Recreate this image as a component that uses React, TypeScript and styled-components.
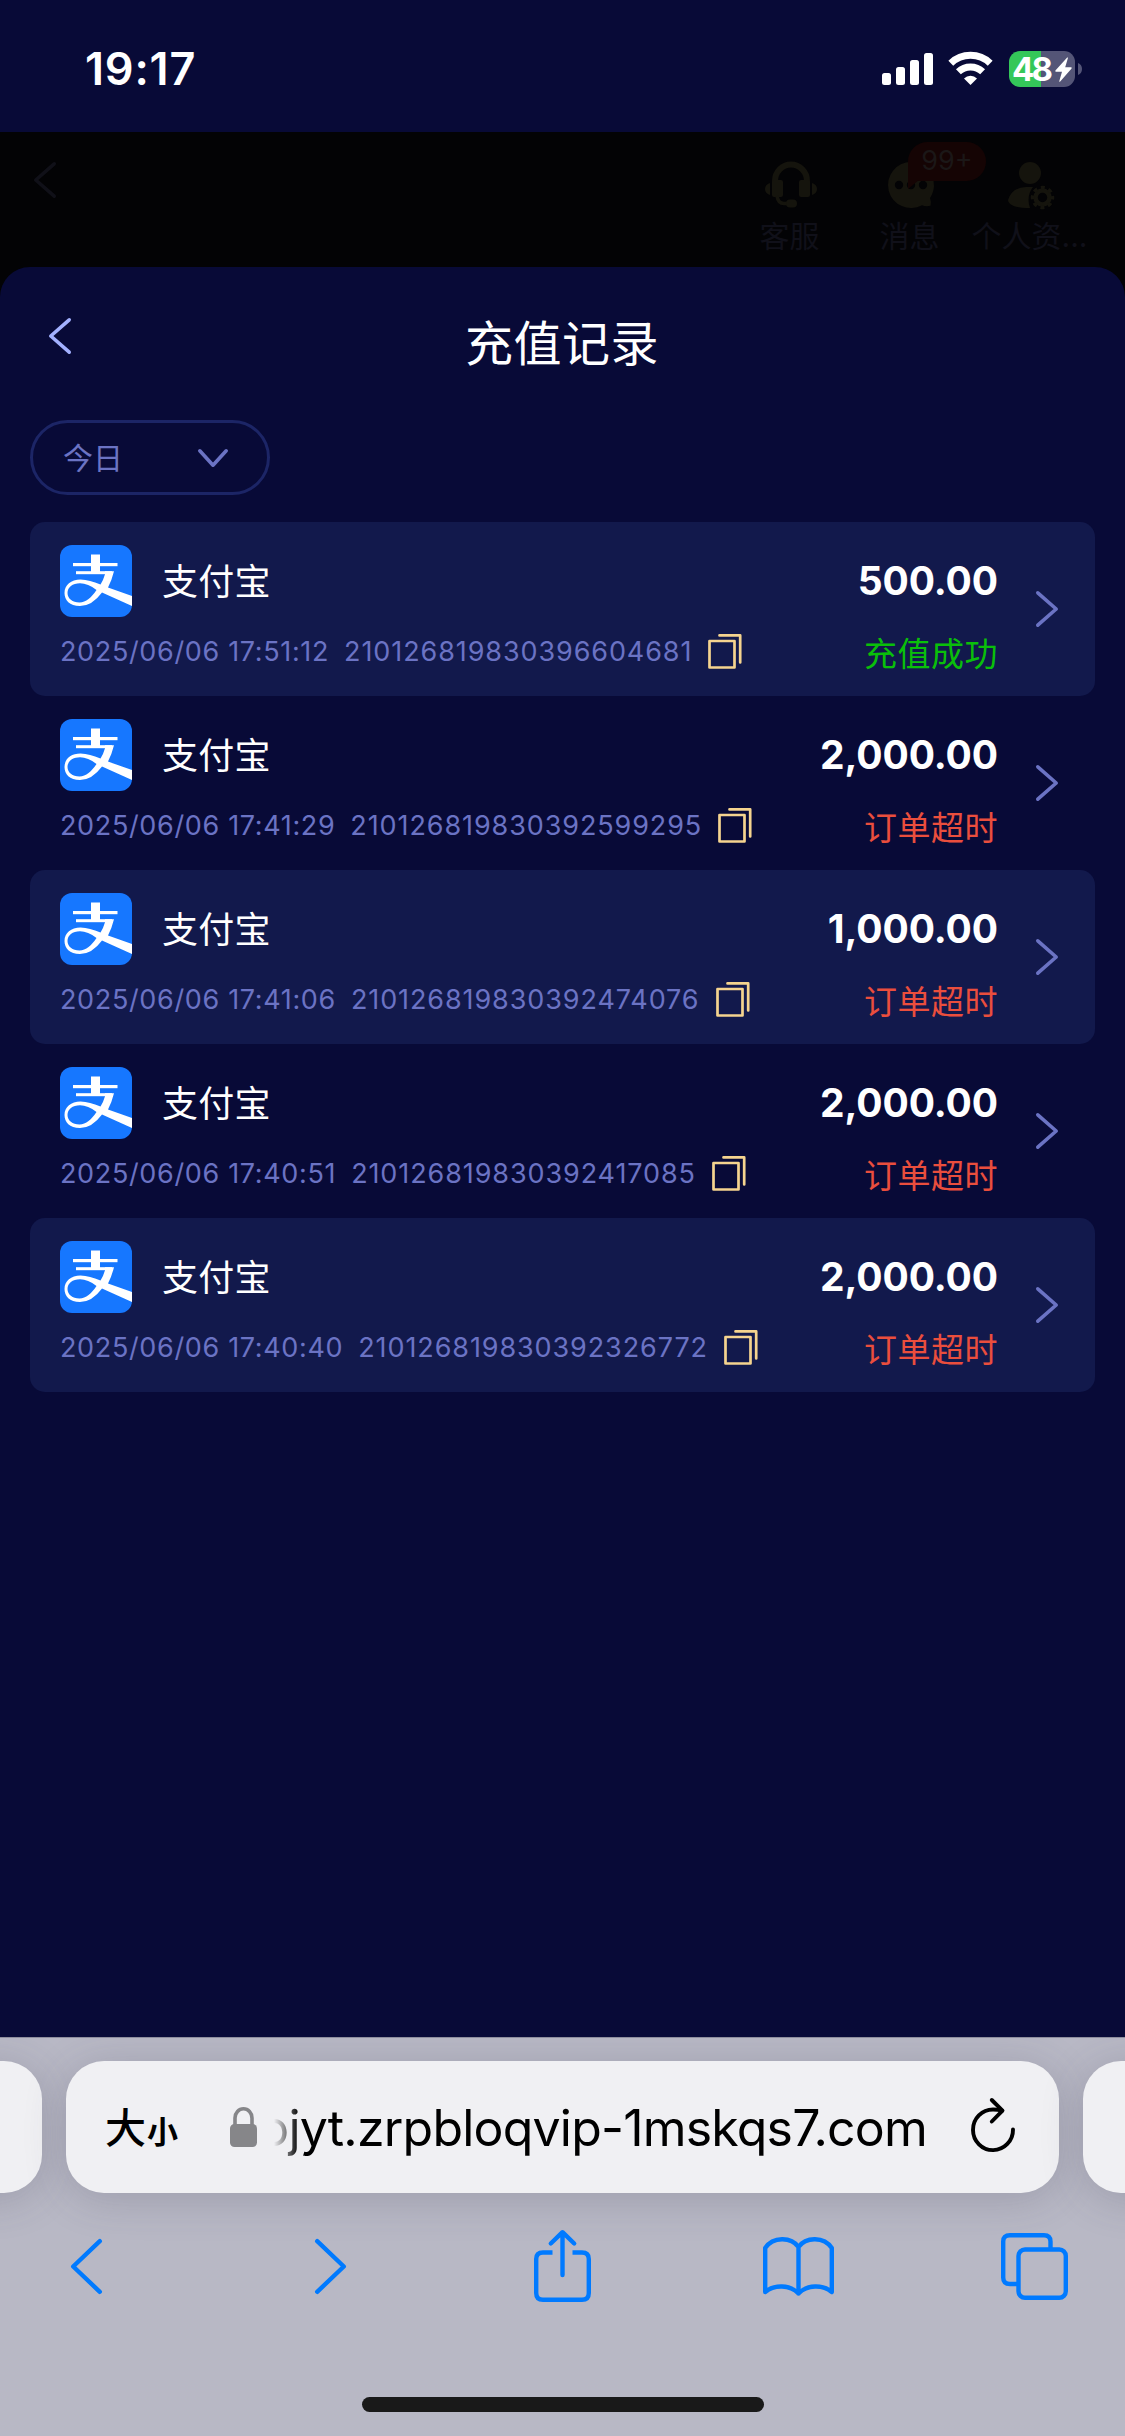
import React from "react";
import styled, { createGlobalStyle } from "styled-components";

const GlobalStyle = createGlobalStyle`
  * { box-sizing: border-box; }
  body { margin: 0; background: #080a37; }
`;

const Screen = styled.div`
  width: 1125px;
  height: 2436px;
  display: flex;
  flex-direction: column;
  overflow: hidden;
  background: #080a37;
  font-family: Inter, "Noto Sans CJK SC", sans-serif;
  color: #fff;
  svg { display: block; flex: none; overflow: visible; }
`;

const StatusBar = styled.header`
  height: 132px;
  flex: none;
  display: flex;
  align-items: flex-start;
  justify-content: space-between;
  padding: 51px 43px 0 85px;
`;

const Clock = styled.div`
  font-size: 45px;
  font-weight: 600;
  line-height: 36px;
  letter-spacing: 0.8px;
`;

const StatusIcons = styled.div`
  display: flex;
  height: 36px;
`;

const Battery = styled.div`
  width: 66px;
  height: 36px;
  margin: 0 3px 0 16px;
  border-radius: 11px;
  background: linear-gradient(90deg, #34c759 32px, #545577 32px);
  display: flex;
  align-items: center;
  padding-left: 3px;
  font-size: 33px;
  font-weight: 700;
  line-height: 36px;
  letter-spacing: -2.8px;
`;

const DimHeader = styled.div`
  height: 135px;
  flex: none;
  display: flex;
  justify-content: space-between;
  padding: 30px 34px 0 34px;
  background: #030305;
`;

const DimActions = styled.nav`
  display: flex;
`;

const DimAction = styled.div`
  position: relative;
  width: 120px;
  display: flex;
  flex-direction: column;
  align-items: center;
  color: #101019;
  font-size: 30px;
  line-height: 40px;
  white-space: nowrap;
  gap: 8px;
`;

const DimLabel = styled.span`
  margin-right: 3px;
`;

const Badge = styled.div`
  position: absolute;
  left: 57px;
  top: -20px;
  width: 78px;
  height: 39px;
  border-radius: 20px 20px 20px 0;
  background: #150404;
  color: #1b1717;
  font-size: 27px;
  line-height: 37px;
  text-align: center;
  &::after {
    content: "";
    position: absolute;
    left: 0;
    top: 38px;
    border-top: 9px solid #150404;
    border-right: 11px solid transparent;
  }
`;

const SheetBackdrop = styled.div`
  flex: 1;
  background: #030305;
  min-height: 0;
`;

const Sheet = styled.main`
  height: 100%;
  border-radius: 30px 30px 0 0;
  background: #080a37;
  padding: 0 30px;
`;

const TitleBar = styled.div`
  height: 153px;
  display: grid;
  grid-template-columns: 60px 1fr 60px;
  padding-top: 51px;
`;

const BackSlot = styled.div`
  padding-left: 19px;
`;

const Title = styled.h1`
  margin: 0 1px 0 0;
  font-size: 48px;
  font-weight: 400;
  line-height: 52px;
  letter-spacing: 0.5px;
  text-align: center;
`;

const DateSelect = styled.div`
  width: 240px;
  height: 75px;
  border: 3px solid #1c2566;
  border-radius: 38px;
  display: flex;
  align-items: center;
  justify-content: space-between;
  padding: 0 39px 0 30px;
  color: #6b73c4;
  font-size: 30px;
  line-height: 66px;
`;

const RecordList = styled.ul`
  list-style: none;
  margin: 27px 0 0;
  padding: 0;
`;

const Record = styled.li<{ $shaded: boolean }>`
  height: 174px;
  border-radius: 15px;
  background: ${(p) => (p.$shaded ? "#12194c" : "transparent")};
  display: flex;
  padding: 23px 37px 0 30px;
`;

const RecordMain = styled.div`
  flex: 1;
`;

const Method = styled.div`
  display: flex;
  align-items: center;
  gap: 30px;
  height: 72px;
  font-size: 36px;
  line-height: 72px;
  letter-spacing: 0.2px;
`;

const MethodName = styled.span`
  padding-top: 2px;
`;

const Details = styled.div`
  display: flex;
  align-items: center;
  height: 36px;
  margin-top: 16px;
  color: #6b73c4;
  font-size: 27px;
  line-height: 37px;
  letter-spacing: 0.65px;
  white-space: pre;
`;

const OrderId = styled.span`
  margin: 0 16px 0 15px;
  letter-spacing: 0.9px;
`;

const Summary = styled.div`
  display: flex;
  flex-direction: column;
  align-items: flex-end;
  margin-right: 38px;
`;

const Amount = styled.div`
  font-size: 39px;
  font-weight: 700;
  line-height: 72px;
  letter-spacing: -0.1px;
`;

const Status = styled.div<{ $ok: boolean }>`
  margin-top: 19px;
  font-size: 33px;
  line-height: 36px;
  letter-spacing: 0.5px;
  color: ${(p) => (p.$ok ? "#0abf0a" : "#ea4e3d")};
`;

const ChevronSlot = styled.div`
  padding-top: 46px;
`;

const Browser = styled.footer`
  height: 399px;
  flex: none;
  border-top: 1px solid #8d8d9d;
  background: #b8b8c5;
  display: flex;
  flex-direction: column;
  align-items: center;
  overflow: hidden;
`;

const Tabs = styled.div`
  display: flex;
  gap: 24px;
  margin-top: 23px;
`;

const TabCard = styled.div`
  width: 993px;
  height: 132px;
  border-radius: 38px;
  background: #f0f0f3;
  box-shadow: 0 6px 42px rgba(60, 60, 80, 0.22);
  display: flex;
  align-items: center;
  padding: 0 44px 0 39px;
  color: #000;
`;

const TextSize = styled.div`
  display: flex;
  align-items: baseline;
  width: 125px;
  padding-top: 6px;
  font-weight: 500;
  font-size: 41px;
  line-height: 60px;
`;

const SmallGlyph = styled.span`
  margin-left: 1px;
  font-size: 31px;
  font-weight: 700;
`;

const Address = styled.div`
  flex: 1;
  display: flex;
  justify-content: flex-end;
  margin-right: 44px;
  padding-top: 2px;
  font-size: 50px;
  line-height: 70px;
  letter-spacing: -0.8px;
  white-space: nowrap;
  mask-image: linear-gradient(90deg, transparent 17px, #000 42px);
`;

const ReloadSlot = styled.div`
  padding-bottom: 4px;
`;

const Toolbar = styled.nav`
  display: grid;
  grid-template-columns: repeat(5, 236px);
  height: 72px;
  margin-top: 37px;
`;

const ToolButton = styled.div<{ $pad?: string }>`
  display: flex;
  justify-content: center;
  align-items: center;
  padding: ${(p) => p.$pad ?? "0"};
`;

const HomeIndicator = styled.div`
  width: 402px;
  height: 15px;
  margin-top: 95px;
  border-radius: 8px;
  background: #191919;
`;

type ChevronProps = { w: number; h: number; color: string; dir?: "left" | "right" | "down"; stroke?: number };

function Chevron({ w, h, color, dir = "left", stroke = 3.6 }: ChevronProps) {
  const a = stroke / 2;
  const points = {
    left: `${w - a},${a} ${a},${h / 2} ${w - a},${h - a}`,
    right: `${a},${a} ${w - a},${h / 2} ${a},${h - a}`,
    down: `${a},${a} ${w / 2},${h - a} ${w - a},${a}`,
  }[dir];
  return (
    <svg width={w} height={h} fill="none" stroke={color} strokeWidth={stroke} strokeLinecap="round" strokeLinejoin="round">
      <polyline points={points} />
    </svg>
  );
}

function SignalIcon() {
  return (
    <svg width="51" height="36" fill="#fff">
      <rect x="0" y="22" width="9" height="12" rx="2.5" />
      <rect x="14" y="16" width="9" height="18" rx="2.5" />
      <rect x="28" y="9" width="9" height="25" rx="2.5" />
      <rect x="42" y="2" width="9" height="32" rx="2.5" />
    </svg>
  );
}

const WifiSvg = styled.svg`
  margin-left: 15px;
`;

function WifiIcon() {
  return (
    <WifiSvg width="45" height="36" fill="none" stroke="#fff" strokeWidth="7">
      <path d="M2.8 12.2 A28.5 28.5 0 0 1 42.2 12.2" />
      <path d="M10.4 20.8 A17.5 17.5 0 0 1 34.600 20.8" />
      <path d="M22.5 34 L16 27.4 A9.5 9.5 0 0 1 29 27.4 Z" fill="#fff" stroke="none" />
    </WifiSvg>
  );
}

const BoltSvg = styled.svg`
  margin-left: 5px;
`;

function BoltIcon() {
  return (
    <BoltSvg width="17" height="25" viewBox="0 0 17 25" fill="#fff">
      <path d="M12.2 0.6 L0.4 13.6 Q0 14.8 1 14.8 H7 L4.2 24.4 Q4.6 25 5.2 24.6 L16.6 11.4 Q17 10.2 16 10.2 H10.2 L13 0.8 Q12.8 0.2 12.2 0.6Z" />
    </BoltSvg>
  );
}

function BatteryNub() {
  return (
    <svg width="4" height="36" fill="#545577">
      <path d="M0 12 Q4 13.5 4 18 Q4 22.5 0 24Z" />
    </svg>
  );
}

const DIM_ICON = "#15140d";

function HeadsetIcon() {
  return (
    <svg width="52" height="46" viewBox="0 0 52 46" fill={DIM_ICON}>
      <path d="M10 20 V19 A16 16.5 0 0 1 42 19 V20" fill="none" stroke={DIM_ICON} strokeWidth="6" />
      <rect x="7" y="18" width="11" height="17" rx="2" />
      <rect x="34" y="18" width="11" height="17" rx="2" />
      <path d="M5 21 V33 Q0 31.500 0 27 Q0 22.500 5 21Z" />
      <path d="M47 21 V33 Q52 31.500 52 27 Q52 22.500 47 21Z" />
      <path d="M12 34 Q13 41.500 19 41.500 H25" fill="none" stroke={DIM_ICON} strokeWidth="3.5" />
      <rect x="21" y="37.500" width="11" height="8" rx="4" />
    </svg>
  );
}

function MessageIcon() {
  return (
    <svg width="46" height="46" viewBox="0 0 46 46">
      <path d="M23 0 A23 23 0 1 0 34 43.200 Q38 45 42.500 43.800 Q43.500 40 42 36 A23 23 0 0 0 23 0Z" fill={DIM_ICON} />
      <g fill="#030305">
        <circle cx="11" cy="23" r="4.200" />
        <circle cx="23" cy="23" r="4.200" />
        <circle cx="35" cy="23" r="4.200" />
      </g>
    </svg>
  );
}

function ProfileIcon() {
  return (
    <svg width="46" height="46" viewBox="0 0 46 46" fill={DIM_ICON}>
      <circle cx="22" cy="11" r="11" />
      <path d="M25 25 H18 Q4 25.500 0 38 Q0 46 22 46 Q18 34 25 25Z" />
      <circle cx="34.500" cy="35.500" r="7" fill="none" stroke={DIM_ICON} strokeWidth="4.500" />
      <circle cx="34.500" cy="35.500" r="10" fill="none" stroke={DIM_ICON} strokeWidth="3.500" strokeDasharray="4 3.854" strokeDashoffset="2" />
    </svg>
  );
}

function AlipayLogo() {
  return (
    <svg width="72" height="72" viewBox="0 0 72 72">
      <rect width="72" height="72" rx="12" fill="#1677ff" />
      <g fill="#fff">
        <rect x="31" y="9.500" width="9" height="19" />
        <rect x="13" y="18" width="44.500" height="3.200" />
        <rect x="16" y="26.200" width="36" height="3" />
        <path
          fillRule="evenodd"
          d="M45 26.200 H54 Q51.500 36 48 42.600 L72 51 V61 L42 47.500 Q32 61 20 61 C9.500 61 4.500 55 4.500 48 C4.500 40 11 34.600 20.500 34.600 C27 34.600 33 36.800 40.500 39.600 Q43.500 34.500 45 29.200Z M36.500 45 Q28 38.300 20 38.300 C12.500 38.300 7.500 42.500 7.500 48 C7.500 53.500 12.500 57.500 19.500 57.500 C26 57.500 31.500 52.500 36.500 45Z"
        />
      </g>
    </svg>
  );
}

function CopyIcon() {
  return (
    <svg width="34" height="35" viewBox="0 0 34 35" fill="none" stroke="#f5d48f" strokeWidth="2.700" strokeLinecap="round" strokeLinejoin="round">
      <rect x="1.500" y="7" width="25" height="26.500" />
      <path d="M11.500 1.400 H32.200 V28.500" />
    </svg>
  );
}

function LockIcon() {
  return (
    <svg width="27" height="40" viewBox="0 0 27 40">
      <rect y="17" width="27" height="23" rx="4.500" fill="#868689" />
      <path d="M5 19 V11 A8.500 9.200 0 0 1 22 11 V19" fill="none" stroke="#868689" strokeWidth="3.600" />
    </svg>
  );
}

function ReloadIcon() {
  return (
    <svg width="44" height="54" viewBox="0 0 44 54" fill="none" stroke="#000" strokeWidth="3.900" strokeLinecap="round" strokeLinejoin="round">
      <path d="M42 31.500 A20 20.300 0 1 1 22 11.500 Q27 11.500 31 12.700" />
      <path d="M20.800 2 L31.500 12.700 L20.800 23.500" />
    </svg>
  );
}

const toolStroke = {
  fill: "none",
  stroke: "#007aff",
  strokeWidth: 4.4,
  strokeLinecap: "round" as const,
  strokeLinejoin: "round" as const,
};

function ShareIcon() {
  return (
    <svg width="57" height="72" viewBox="0 0 57 72" {...toolStroke}>
      <path d="M18.500 22.500 H9 Q2.200 22.500 2.200 29 V63 Q2.200 69.800 9 69.800 H48 Q54.800 69.800 54.800 63 V29 Q54.800 22.500 48 22.500 H38.500" strokeLinecap="butt" />
      <path d="M28.500 45 V2.500 M16.800 13.500 L28.500 2.200 L40.200 13.500" />
    </svg>
  );
}

function BookIcon() {
  return (
    <svg width="71" height="59" viewBox="0 0 71 59" {...toolStroke}>
      <path d="M35.500 10 C28 -0.500 10 -0.500 2.200 11 V55 C11 47.500 27 47.500 35.500 56.500 C44 47.500 60 47.500 68.800 55 V11 C61 -0.500 43 -0.500 35.500 10 V56.500" />
    </svg>
  );
}

function TabsIcon() {
  return (
    <svg width="67" height="67" viewBox="0 0 67 67" {...toolStroke}>
      <path d="M17.500 51 H9 Q2.200 51 2.200 44.500 V8.500 Q2.200 2.200 9 2.200 H43 Q49.500 2.200 49.500 8.500 V17" strokeLinecap="butt" />
      <rect x="17.500" y="16.500" width="47.300" height="48.300" rx="6.500" />
    </svg>
  );
}

const records = [
  { time: "2025/06/06 17:51:12", id: "210126819830396604681", amount: "500.00", ok: true },
  { time: "2025/06/06 17:41:29", id: "210126819830392599295", amount: "2,000.00", ok: false },
  { time: "2025/06/06 17:41:06", id: "210126819830392474076", amount: "1,000.00", ok: false },
  { time: "2025/06/06 17:40:51", id: "210126819830392417085", amount: "2,000.00", ok: false },
  { time: "2025/06/06 17:40:40", id: "210126819830392326772", amount: "2,000.00", ok: false },
];

export default function App() {
  return (
    <Screen>
      <GlobalStyle />
      <StatusBar>
        <Clock>19:17</Clock>
        <StatusIcons>
          <SignalIcon />
          <WifiIcon />
          <Battery>
            48
            <BoltIcon />
          </Battery>
          <BatteryNub />
        </StatusIcons>
      </StatusBar>
      <DimHeader>
        <Chevron w={22} h={36} color="#101018" />
        <DimActions>
          <DimAction>
            <HeadsetIcon />
            <DimLabel>客服</DimLabel>
          </DimAction>
          <DimAction>
            <MessageIcon />
            <DimLabel>消息</DimLabel>
            <Badge>99+</Badge>
          </DimAction>
          <DimAction>
            <ProfileIcon />
            <DimLabel>个人资...</DimLabel>
          </DimAction>
        </DimActions>
      </DimHeader>
      <SheetBackdrop>
        <Sheet>
          <TitleBar>
            <BackSlot>
              <Chevron w={22} h={36} color="#a3b1ff" />
            </BackSlot>
            <Title>充值记录</Title>
          </TitleBar>
          <DateSelect>
            今日
            <Chevron w={30} h={18} color="#6b73c4" dir="down" />
          </DateSelect>
          <RecordList>
            {records.map((r, i) => (
              <Record key={r.id} $shaded={i % 2 === 0}>
                <RecordMain>
                  <Method>
                    <AlipayLogo />
                    <MethodName>支付宝</MethodName>
                  </Method>
                  <Details>
                    {r.time}
                    <OrderId>{r.id}</OrderId>
                    <CopyIcon />
                  </Details>
                </RecordMain>
                <Summary>
                  <Amount>{r.amount}</Amount>
                  <Status $ok={r.ok}>{r.ok ? "充值成功" : "订单超时"}</Status>
                </Summary>
                <ChevronSlot>
                  <Chevron w={22} h={36} color="#6b73c4" dir="right" />
                </ChevronSlot>
              </Record>
            ))}
          </RecordList>
        </Sheet>
      </SheetBackdrop>
      <Browser>
        <Tabs>
          <TabCard />
          <TabCard>
            <TextSize>
              大<SmallGlyph>小</SmallGlyph>
            </TextSize>
            <LockIcon />
            <Address>ojyt.zrpbloqvip-1mskqs7.com</Address>
            <ReloadSlot>
              <ReloadIcon />
            </ReloadSlot>
          </TabCard>
          <TabCard />
        </Tabs>
        <Toolbar>
          <ToolButton $pad="0 8px 0 0">
            <Chevron w={31} h={55} color="#007aff" stroke={4.4} />
          </ToolButton>
          <ToolButton $pad="0 0 0 8px">
            <Chevron w={31} h={55} color="#007aff" stroke={4.4} dir="right" />
          </ToolButton>
          <ToolButton>
            <ShareIcon />
          </ToolButton>
          <ToolButton>
            <BookIcon />
          </ToolButton>
          <ToolButton>
            <TabsIcon />
          </ToolButton>
        </Toolbar>
        <HomeIndicator />
      </Browser>
    </Screen>
  );
}
